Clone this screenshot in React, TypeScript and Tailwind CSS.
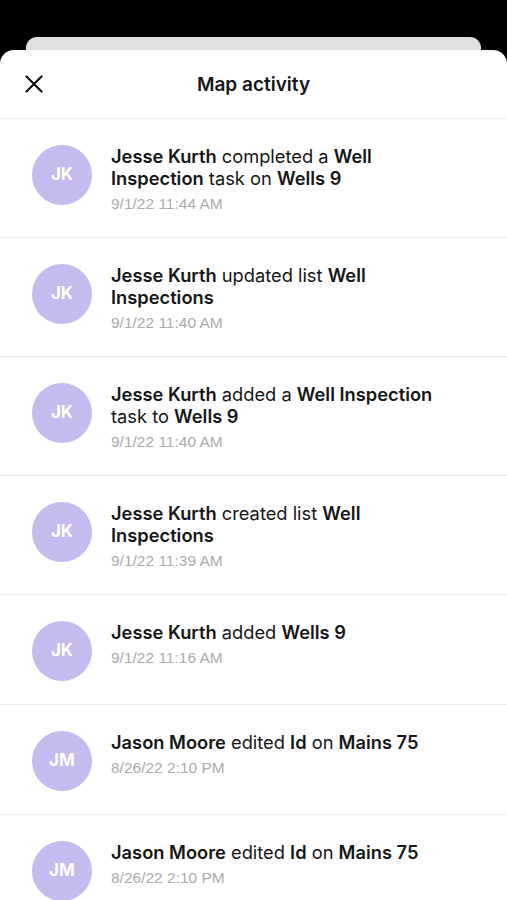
type Part = { t: string; b?: boolean }

type Activity = {
  initials: string
  parts: Part[]
  time: string
}

const activities: Activity[] = [
  {
    initials: 'JK',
    parts: [
      { t: 'Jesse Kurth', b: true },
      { t: ' completed a ' },
      { t: 'Well Inspection', b: true },
      { t: ' task on ' },
      { t: 'Wells 9', b: true },
    ],
    time: '9/1/22 11:44 AM',
  },
  {
    initials: 'JK',
    parts: [
      { t: 'Jesse Kurth', b: true },
      { t: ' updated list ' },
      { t: 'Well Inspections', b: true },
    ],
    time: '9/1/22 11:40 AM',
  },
  {
    initials: 'JK',
    parts: [
      { t: 'Jesse Kurth', b: true },
      { t: ' added a ' },
      { t: 'Well Inspection', b: true },
      { t: ' task to ' },
      { t: 'Wells 9', b: true },
    ],
    time: '9/1/22 11:40 AM',
  },
  {
    initials: 'JK',
    parts: [
      { t: 'Jesse Kurth', b: true },
      { t: ' created list ' },
      { t: 'Well Inspections', b: true },
    ],
    time: '9/1/22 11:39 AM',
  },
  {
    initials: 'JK',
    parts: [
      { t: 'Jesse Kurth', b: true },
      { t: ' added ' },
      { t: 'Wells 9', b: true },
    ],
    time: '9/1/22 11:16 AM',
  },
  {
    initials: 'JM',
    parts: [
      { t: 'Jason Moore', b: true },
      { t: ' edited ' },
      { t: 'Id', b: true },
      { t: ' on ' },
      { t: 'Mains 75', b: true },
    ],
    time: '8/26/22 2:10 PM',
  },
  {
    initials: 'JM',
    parts: [
      { t: 'Jason Moore', b: true },
      { t: ' edited ' },
      { t: 'Id', b: true },
      { t: ' on ' },
      { t: 'Mains 75', b: true },
    ],
    time: '8/26/22 2:10 PM',
  },
]

function ActivityRow({ item }: { item: Activity }) {
  return (
    <div className="flex items-start border-b border-[#ececec] pl-[32px] pt-[24px] pb-[23px]">
      <div className="mt-[2px] flex h-[60px] w-[60px] shrink-0 items-center justify-center rounded-full bg-[#c6bbee] text-[17px] font-bold text-white">
        {item.initials}
      </div>
      <div className="ml-[19px] mt-[2px] w-[345px]">
        <p className="text-[18.3px] leading-[22px] text-[#161616]">
          {item.parts.map((p, i) => (
            <span key={i} className={p.b ? 'font-semibold' : 'font-normal'}>
              {p.t}
            </span>
          ))}
        </p>
        <div className="mt-[5px] font-['Liberation_Sans',sans-serif] text-[15.5px] leading-[20px] text-[#ababab]">
          {item.time}
        </div>
      </div>
    </div>
  )
}

export default function App() {
  return (
    <div className="flex h-[900px] w-full flex-col overflow-hidden bg-black font-['Inter',sans-serif]">
      {/* stacked sheet behind */}
      <div className="mx-[26px] mt-[37px] h-[20px] shrink-0 rounded-t-[11px] bg-[#e0e0e0]" />

      {/* sheet */}
      <div className="-mt-[7px] flex flex-1 flex-col rounded-t-[14px] bg-white">
        <div className="relative flex h-[69px] shrink-0 items-center justify-center border-b border-[#ececec] pt-[2px]">
          <button className="absolute left-[25px] top-[25px] text-[#111]">
            <svg width="18" height="18" viewBox="0 0 18 18" fill="none" stroke="currentColor" strokeWidth="2.2" strokeLinecap="round">
              <path d="M1.5 1.5L16.5 16.5M16.5 1.5L1.5 16.5" />
            </svg>
          </button>
          <h1 className="text-[19px] font-semibold text-[#161616]">Map activity</h1>
        </div>

        <div className="flex flex-col">
          {activities.map((a, i) => (
            <ActivityRow key={i} item={a} />
          ))}
        </div>
      </div>
    </div>
  )
}
